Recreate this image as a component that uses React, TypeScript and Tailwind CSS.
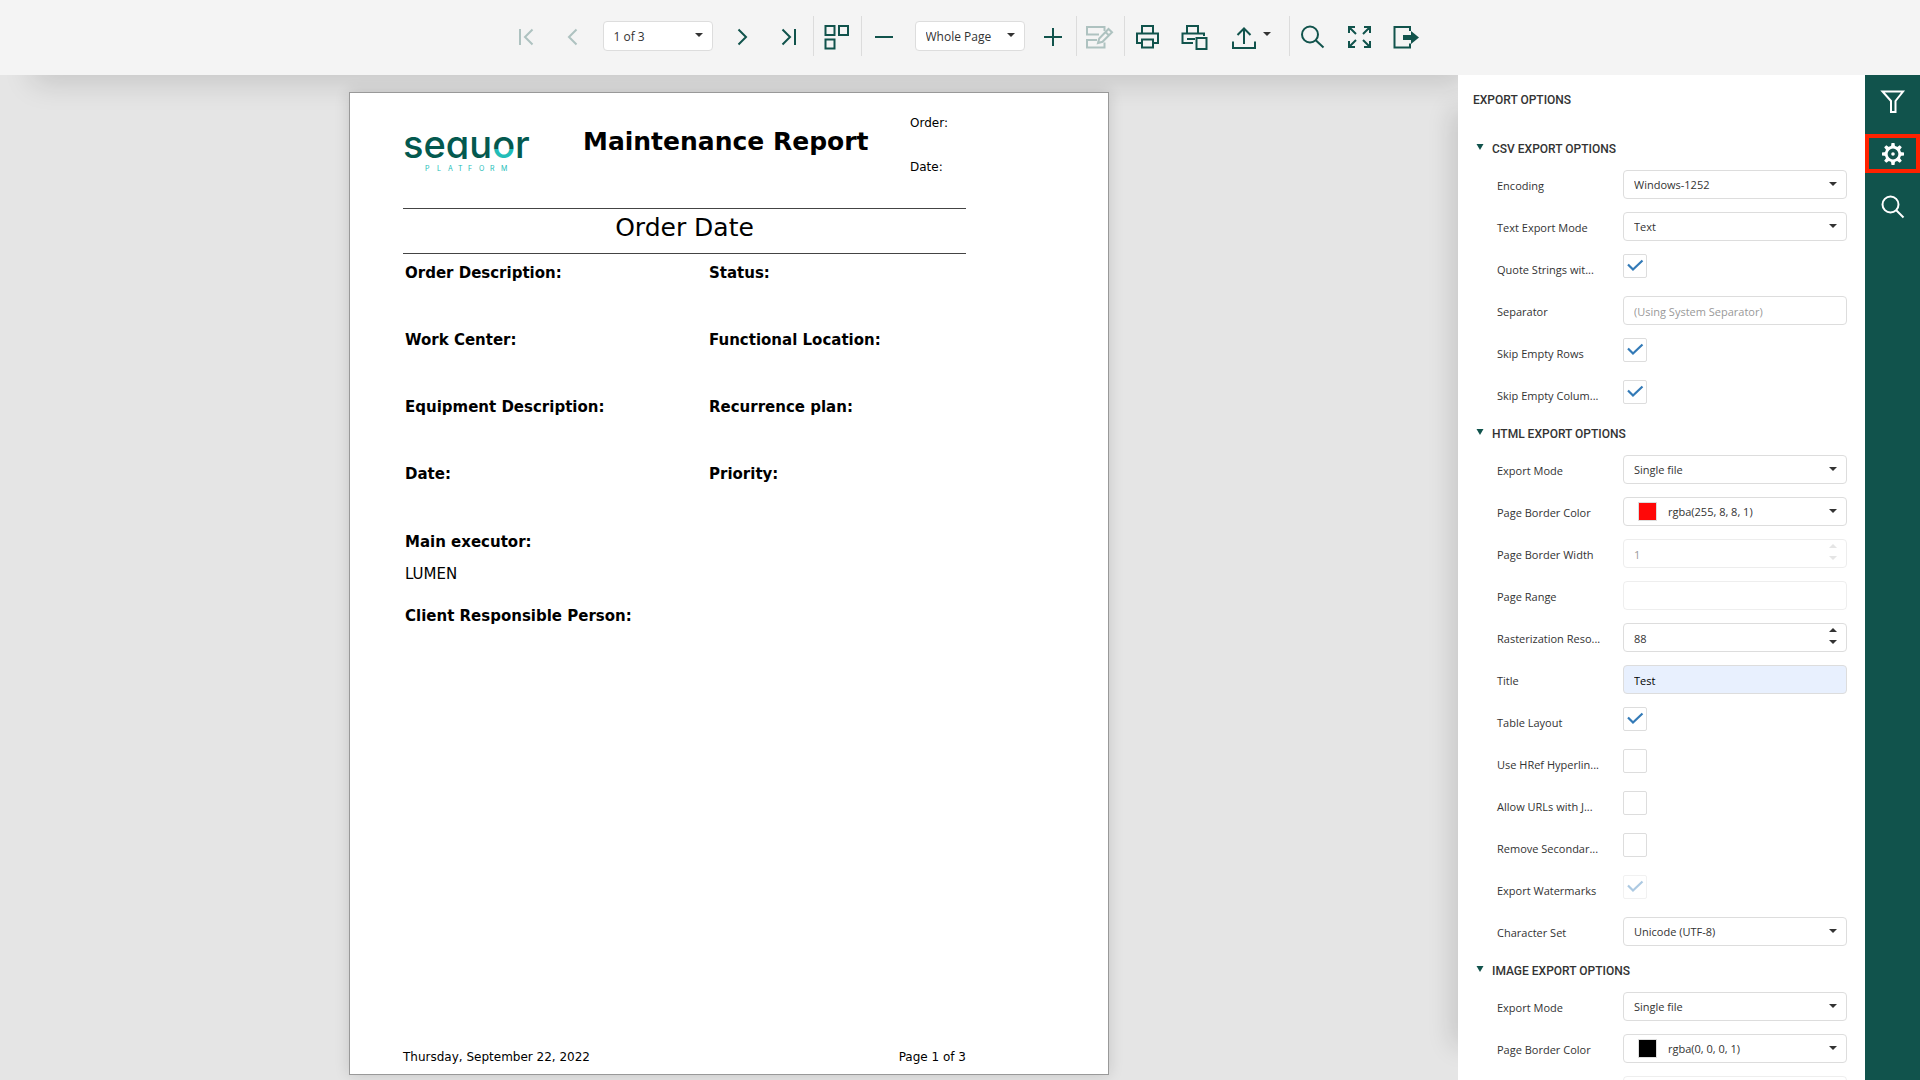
import React, { useState } from 'react';
import clsx from 'clsx';

type FieldType = 'select' | 'color' | 'checkbox' | 'text' | 'number';

interface Field {
    label: string;
    type: FieldType;
    value?: string;
    checked?: boolean;
    placeholder?: string;
    disabled?: boolean;
    filled?: boolean;
}

interface Group {
    title: string;
    fields: Field[];
}

const groups: Group[] = [
    {
        title: 'CSV EXPORT OPTIONS',
        fields: [
            { label: 'Encoding', type: 'select', value: 'Windows-1252' },
            { label: 'Text Export Mode', type: 'select', value: 'Text' },
            { label: 'Quote Strings wit...', type: 'checkbox', checked: true },
            { label: 'Separator', type: 'text', placeholder: '(Using System Separator)' },
            { label: 'Skip Empty Rows', type: 'checkbox', checked: true },
            { label: 'Skip Empty Colum...', type: 'checkbox', checked: true },
        ],
    },
    {
        title: 'HTML EXPORT OPTIONS',
        fields: [
            { label: 'Export Mode', type: 'select', value: 'Single file' },
            { label: 'Page Border Color', type: 'color', value: 'rgba(255, 8, 8, 1)' },
            { label: 'Page Border Width', type: 'number', value: '1', disabled: true },
            { label: 'Page Range', type: 'text', disabled: true },
            { label: 'Rasterization Reso...', type: 'number', value: '88' },
            { label: 'Title', type: 'text', value: 'Test', filled: true },
            { label: 'Table Layout', type: 'checkbox', checked: true },
            { label: 'Use HRef Hyperlin...', type: 'checkbox' },
            { label: 'Allow URLs with J...', type: 'checkbox' },
            { label: 'Remove Secondar...', type: 'checkbox' },
            { label: 'Export Watermarks', type: 'checkbox', checked: true, disabled: true },
            { label: 'Character Set', type: 'select', value: 'Unicode (UTF-8)' },
        ],
    },
    {
        title: 'IMAGE EXPORT OPTIONS',
        fields: [
            { label: 'Export Mode', type: 'select', value: 'Single file' },
            { label: 'Page Border Color', type: 'color', value: 'rgba(0, 0, 0, 1)' },
            { label: 'Page Border Width', type: 'number', value: '1', disabled: true },
        ],
    },
];

const reportRows = [
    ['Order Description:', 'Status:'],
    ['Work Center:', 'Functional Location:'],
    ['Equipment Description:', 'Recurrence plan:'],
    ['Date:', 'Priority:'],
];

function Caret({ up = false, className }: { up?: boolean; className?: string }) {
    return (
        <svg width="8" height="4" viewBox="0 0 8 4" className={className} fill="currentColor">
            <path d={up ? 'M0 4h8L4 0z' : 'M0 0h8L4 4z'} />
        </svg>
    );
}

/* ---------- Toolbar ---------- */

function Icon({ children, size = 28 }: { children: React.ReactNode; size?: number }) {
    return (
        <svg width={size} height={size} viewBox="0 0 28 28" fill="none" stroke="currentColor" strokeWidth="2" className="shrink-0">
            {children}
        </svg>
    );
}

function ToolButton({ label, disabled, children }: { label: string; disabled?: boolean; children: React.ReactNode }) {
    return (
        <button
            aria-label={label}
            disabled={disabled}
            className="w-[47px] h-10 pt-0.5 flex items-center justify-center disabled:opacity-30 cursor-pointer disabled:cursor-default"
        >
            <Icon>{children}</Icon>
        </button>
    );
}

function Separator() {
    return <div className="w-px h-10 bg-[#dcdcdc]" />;
}

function ToolSelect({ label, value }: { label: string; value: string }) {
    return (
        <div className="relative w-[110px] shrink-0">
            <select
                aria-label={label}
                defaultValue={value}
                className="appearance-none block w-full h-[30px] pt-0.5 pl-2.5 pr-6 bg-white border border-[#dddddd] rounded text-xs text-[#333333]"
            >
                <option>{value}</option>
            </select>
            <Caret className="absolute right-2.5 top-3 text-[#333333] pointer-events-none" />
        </div>
    );
}

function Toolbar() {
    return (
        <header className="relative z-20 h-[75px] bg-[#f4f4f4] flex items-start justify-center pt-4 pl-[13px] text-[#11534c]">
            <div className="flex items-center">
                <ToolButton label="First page" disabled>
                    <path d="M8 6v16M20.500 6.500 13 14l7.500 7.500" />
                </ToolButton>
                <ToolButton label="Previous page" disabled>
                    <path d="M17.500 6.500 10 14l7.500 7.500" />
                </ToolButton>
                <div className="px-1.5">
                    <ToolSelect label="Page" value="1 of 3" />
                </div>
                <ToolButton label="Next page">
                    <path d="M10.500 6.500 18 14l-7.500 7.500" />
                </ToolButton>
                <ToolButton label="Last page">
                    <path d="M7.500 6.500 15 14l-7.500 7.500M20 6v16" />
                </ToolButton>
                <Separator />
                <ToolButton label="Multipage view">
                    <path d="M2.500 3h9v9h-9zM16 3h9v9h-9zM2.500 16.500h9v9h-9z" />
                </ToolButton>
                <Separator />
                <ToolButton label="Zoom out">
                    <path d="M4 14h18" />
                </ToolButton>
                <div className="pl-1.5 pr-1">
                    <ToolSelect label="Zoom" value="Whole Page" />
                </div>
                <ToolButton label="Zoom in">
                    <path d="M6 14h18M15 5v18" />
                </ToolButton>
                <Separator />
                <ToolButton label="Edit fields" disabled>
                    <path d="M18.500 8V4H1v7.500h12M11 17H1v7.500h17.500v-5" />
                    <path d="M12 20l1.200-4.500L22.500 6l3.500 3.300-9.500 9.500zM19.500 9l3.500 3.500" />
                </ToolButton>
                <Separator />
                <ToolButton label="Print">
                    <path d="M8 10V3h11v7M8 20H3v-9.500h21V20h-5M8 16.500h11v8H8z" />
                </ToolButton>
                <ToolButton label="Print page">
                    <path d="M6 10V3h11v7M12 20H1.500v-9.500H23V13M6 16h8" />
                    <path d="M15.500 15h10v11h-10z" />
                </ToolButton>
                <button aria-label="Export to" className="w-[70px] h-10 pt-0.5 pl-3 flex items-center cursor-pointer">
                    <Icon>
                        <path d="M2 18.500V25h22v-6.500M13 21V6M6.500 12 13 5.500l6.500 6.500" />
                    </Icon>
                    <Caret className="ml-1 mb-1.5 text-[#333333]" />
                </button>
                <Separator />
                <ToolButton label="Search">
                    <circle cx="11" cy="11.500" r="8" />
                    <path d="M16.500 17 24.500 24.500" />
                </ToolButton>
                <ToolButton label="Full screen">
                    <path d="M3 10V4h6M3.500 4.500 10 11M18 4h6v6M23.500 4.500 17 11M3 18v6h6M3.500 23.500 10 17M24 18v6h-6M23.500 23.500 17 17" />
                </ToolButton>
                <ToolButton label="Exit">
                    <path d="M17 8V4H1.500v20.500H17v-4" />
                    <path d="M10 12h8V8l8 6.500-8 6.500v-4h-8z" fill="currentColor" stroke="none" />
                </ToolButton>
            </div>
        </header>
    );
}

/* ---------- Report page ---------- */

function Logo() {
    return (
        <svg width="132" height="40" viewBox="0 0 132 40" role="img" aria-label="sequor platform" className="shrink-0 overflow-visible">
            <defs>
                <linearGradient id="ring" gradientUnits="userSpaceOnUse" x1="0" y1="4" x2="0" y2="26">
                    <stop offset="0.550" stopColor="#04594f" />
                    <stop offset="0.550" stopColor="#22bdb8" />
                </linearGradient>
            </defs>
            <text x="0" y="25" fontSize="38" fontWeight="500" className="font-['Inter',sans-serif]" fill="#04594f">
                sequ<tspan fill="url(#ring)">o</tspan>r
            </text>
            {/* The q of the wordmark has no descender */}
            <rect x="44" y="26" width="24" height="9" fill="#ffffff" />
            <text x="22 34 45 55 65 76 87 98" y="38" fontSize="7" className="font-['Inter',sans-serif]" fill="#22bdb8">
                PLATFORM
            </text>
        </svg>
    );
}

function ReportPage() {
    return (
        <article className="relative w-[760px] flex-1 flex flex-col bg-white border border-[#999999] shadow-[0_0_14px_rgba(0,0,0,0.14)] pl-[53px] pr-[142px] text-black font-['DejaVu_Sans',sans-serif]">
            <div className="flex items-start h-[116px] border-b border-[#444444]">
                <div className="pt-10">
                    <Logo />
                </div>
                <h1 className="flex-1 pt-[33px] pl-12 text-[25px] leading-8 font-bold whitespace-nowrap">Maintenance Report</h1>
                <div className="w-14 pt-5 text-xs leading-5 flex flex-col gap-6">
                    <span>Order:</span>
                    <span>Date:</span>
                </div>
            </div>
            <h2 className="h-[45px] border-b border-[#444444] text-center text-[25px] leading-[38px]">Order Date</h2>

            <div className="pt-[9px] pl-0.5 text-[15px] leading-5">
                {reportRows.map(([left, right]) => (
                    <div key={left} className="grid grid-cols-[304px_1fr] h-[67px] font-bold whitespace-nowrap">
                        <span>{left}</span>
                        <span>{right}</span>
                    </div>
                ))}
                <p className="pt-px font-bold">Main executor:</p>
                <p className="pt-3">LUMEN</p>
                <p className="pt-[22px] font-bold">Client Responsible Person:</p>
            </div>

            <footer className="mt-auto pb-[7px] flex justify-between text-xs leading-5">
                <span>Thursday, September 22, 2022</span>
                <span>Page 1 of 3</span>
            </footer>
        </article>
    );
}

/* ---------- Export options ---------- */

const boxClass = 'block w-full h-[29px] border border-[#dddddd] rounded pt-0.5 px-2.5 text-[11px] text-[#333333] placeholder:text-[#999999]';

function FieldInput({ id, field }: { id: string; field: Field }) {
    const [checked, setChecked] = useState(!!field.checked);

    if (field.type === 'checkbox') {
        return (
            <div className={clsx('relative size-6', field.disabled && 'opacity-40')}>
                <input
                    id={id}
                    type="checkbox"
                    checked={checked}
                    disabled={field.disabled}
                    onChange={(e) => setChecked(e.target.checked)}
                    className="appearance-none block size-6 border border-[#dddddd] rounded-xs bg-white"
                />
                {checked && (
                    <svg width="24" height="24" viewBox="0 0 24 24" fill="none" stroke="#337ab7" strokeWidth="2.200" className="absolute inset-0 pointer-events-none">
                        <path d="M5 10.500 10 15.500 19.500 6.500" />
                    </svg>
                )}
            </div>
        );
    }

    if (field.type === 'select' || field.type === 'color') {
        return (
            <div className="relative w-full">
                <select id={id} defaultValue={field.value} className={clsx(boxClass, 'appearance-none', field.type === 'color' && 'pl-11')}>
                    <option>{field.value}</option>
                </select>
                {field.type === 'color' && (
                    <span
                        className="absolute left-[15px] top-[5px] size-[19px] border border-[#dddddd] pointer-events-none"
                        style={{ backgroundColor: field.value }}
                    />
                )}
                <Caret className="absolute right-2.5 top-3 text-[#333333] pointer-events-none" />
            </div>
        );
    }

    if (field.type === 'number') {
        return (
            <div className={clsx('relative w-full', field.disabled && 'opacity-50')}>
                <input
                    id={id}
                    type="text"
                    inputMode="numeric"
                    defaultValue={field.value}
                    disabled={field.disabled}
                    className={boxClass}
                />
                <div className={clsx('absolute right-2.5 top-[5px] flex flex-col gap-2 pointer-events-none', field.disabled ? 'text-[#cccccc]' : 'text-[#333333]')}>
                    <Caret up />
                    <Caret />
                </div>
            </div>
        );
    }

    return (
        <input
            id={id}
            type="text"
            defaultValue={field.value}
            placeholder={field.placeholder}
            disabled={field.disabled}
            className={clsx(boxClass, field.filled && 'bg-[#e8f0fe] text-black', field.disabled && 'opacity-50')}
        />
    );
}

function OptionGroup({ group, index }: { group: Group; index: number }) {
    const [open, setOpen] = useState(true);

    return (
        <section>
            <button
                onClick={() => setOpen(!open)}
                className="flex items-center gap-2 h-[33px] pb-2.5 pl-[18px] text-xs font-medium text-[#333333] font-['Roboto',sans-serif] cursor-pointer"
            >
                <svg width="8" height="6" viewBox="0 0 8 6" className="mb-1 fill-[#11534c]">
                    <path d="M0.500 0h7L4 6z" />
                </svg>
                {group.title}
            </button>
            {open &&
                group.fields.map((field, i) => {
                    const id = `field-${index}-${i}`;
                    return (
                        <div key={id} className="flex items-start h-[42px] pl-[39px] pr-[18px]">
                            <label htmlFor={id} className="w-[126px] shrink-0 pt-1.5 text-[11px] leading-5 whitespace-nowrap text-[#333333]">
                                {field.label}
                            </label>
                            <FieldInput id={id} field={field} />
                        </div>
                    );
                })}
        </section>
    );
}

function ExportPanel() {
    return (
        <aside className="relative w-[407px] shrink-0 bg-white overflow-hidden">
            <h2 className="h-[62px] pl-[15px] pt-[15px] text-xs leading-5 font-medium text-[#333333] font-['Roboto',sans-serif]">
                EXPORT OPTIONS
            </h2>
            {groups.map((group, i) => (
                <OptionGroup key={group.title} group={group} index={i} />
            ))}
        </aside>
    );
}

/* ---------- Right side bar ---------- */

const teeth = [0, 45, 90, 135, 180, 225, 270, 315];

function SideBar() {
    return (
        <nav className="w-[55px] shrink-0 bg-[#11534c] text-white flex flex-col gap-[7px]">
            <button aria-label="Parameters" className="h-[52px] flex items-center justify-center cursor-pointer">
                <Icon>
                    <path d="M3.500 4.500h20.500L16.500 14v11h-4.500V14z" />
                </Icon>
            </button>
            <button aria-label="Export options" className="h-[39px] border-4 border-[#ff2200] flex items-center justify-center cursor-pointer">
                <Icon>
                    <circle cx="14" cy="14" r="6.800" strokeWidth="2.800" />
                    <circle cx="14" cy="14" r="1.800" fill="currentColor" stroke="none" />
                    {teeth.map((angle) => (
                        <path key={angle} d="M12.500 3h3l.6 4h-4.200z" fill="currentColor" stroke="none" transform={`rotate(${angle} 14 14)`} />
                    ))}
                </Icon>
            </button>
            <button aria-label="Search" className="h-[52px] flex items-center justify-center cursor-pointer">
                <Icon>
                    <circle cx="11.500" cy="12.500" r="8" />
                    <path d="M17 18 24.500 25.500" />
                </Icon>
            </button>
        </nav>
    );
}

export default function App() {
    return (
        <div className="h-screen flex flex-col overflow-hidden bg-[#e5e5e5] font-['Open_Sans',sans-serif]">
            <Toolbar />
            <div className="flex-1 min-h-0 flex">
                <main className="relative flex-1 min-w-0 flex flex-col items-center pt-[17px] pb-[5px]">
                    {/* Soft shadows cast by the toolbar and the options panel */}
                    <div className="absolute left-10 right-0 -top-5 h-5 shadow-[0_0_30px_8px_rgba(0,0,0,0.14)]" />
                    <div className="absolute -right-5 top-10 bottom-10 w-5 shadow-[0_0_26px_6px_rgba(0,0,0,0.14)]" />
                    <ReportPage />
                </main>
                <ExportPanel />
                <SideBar />
            </div>
        </div>
    );
}
